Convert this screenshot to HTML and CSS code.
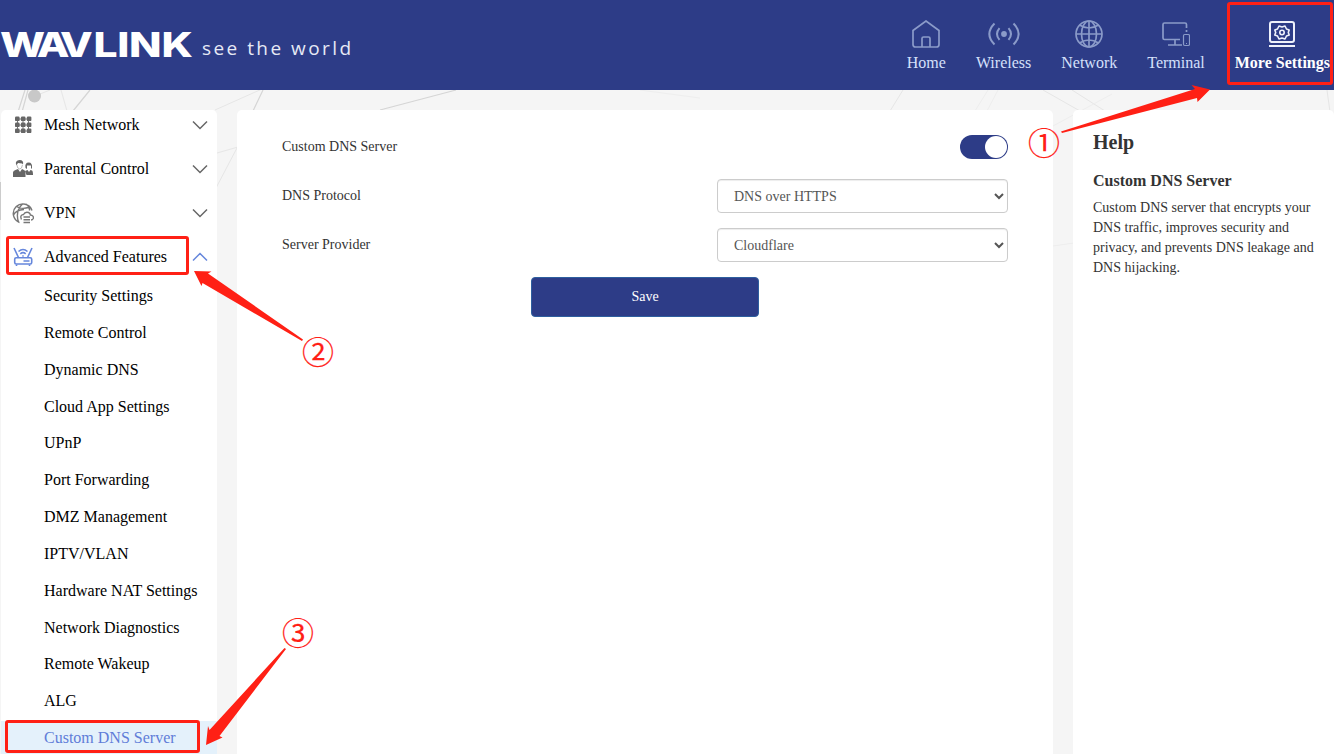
FILE: index.html
```html
<!DOCTYPE html>
<html lang="en">
<head>
<meta charset="utf-8">
<title>WAVLINK - Custom DNS Server</title>
<link rel="stylesheet" href="styles.css">
</head>
<body>
<svg class="backdrop" width="1334" height="754" viewBox="0 0 1334 754" fill="none" stroke="#e6e6e6">
  <path d="M25 90L18 112M28 90L22 112M90 90L73 111M253 111L263 90M380 110L456 90" stroke="#d5d5d5" stroke-width="1.2"/>
  <path d="M40 94L50 90M61 90L67 111M215 110L262 89M217 153L238 147M238 146L216 188M890 111L903 90M1043 90L1080 111M1072 90L1105 111M1327 90L1330 112"/>
  <path d="M975 111L988 90M987 111L998 90M1053 126L1112 94M1053 246L1074 243M640 90L700 98" stroke="#eeeeee"/>
  <circle cx="34.500" cy="96" r="6.500" fill="#c8c8c8" stroke="none"/>
  <path d="M0 182V220" stroke="#ccc" stroke-width="2"/>
</svg>

<header class="header">
  <div class="brand">
    <svg class="wordmark" width="191" height="34" viewBox="0 0 191 34">
      <text class="wordmark-text" transform="translate(0 29) scale(1.27 1)" dx="0 -4 -4.500 0.500 -0.300 -0.300 0">WAVLINK</text>
    </svg>
    <span class="tagline">see the world</span>
  </div>
  <nav class="nav">
    <a class="nav-item">
      <svg class="nav-icon" viewBox="0 0 28 28"><path d="M1 10.500L14 1L27 10.500V24.500Q27 27 24.500 27H3.500Q1 27 1 24.500ZM10 27V18.500Q10 17 11.500 17H16.500Q18 17 18 18.500V27"/></svg>
      <span>Home</span>
    </a>
    <a class="nav-item">
      <svg class="nav-icon wide" viewBox="0 0 32 28"><circle cx="16" cy="14" r="2.900" class="solid"/><path d="M11.500 8.200Q6.500 14 11.500 19.800M20.500 8.200Q25.500 14 20.500 19.800M6.500 3.500Q-3.800 14 6.500 24.500M25.500 3.500Q35.800 14 25.500 24.500" stroke-width="2"/></svg>
      <span>Wireless</span>
    </a>
    <a class="nav-item">
      <svg class="nav-icon" viewBox="0 0 28 28"><circle cx="14" cy="14" r="13"/><ellipse cx="14" cy="14" rx="7.500" ry="13"/><path d="M14 1V27M1 14H27M4.500 5Q14 11 23.500 5M4.500 23Q14 17 23.500 23"/></svg>
      <span>Network</span>
    </a>
    <a class="nav-item">
      <svg class="nav-icon" viewBox="0 0 28 28"><path d="M24.500 8V4.500Q24.500 3 23 3H2.500Q1 3 1 4.500V18Q1 19.500 2.500 19.500H18M13 20V25M6 25H20M24.500 10V12"/><rect x="21.500" y="14.500" width="6" height="11" rx="1.200" stroke-width="1.200"/><path d="M24 23.500H25" stroke-width="1"/></svg>
      <span>Terminal</span>
    </a>
    <a class="nav-item active">
      <svg class="nav-icon" viewBox="0 0 28 28"><rect x="2" y="2" width="24" height="20" rx="2"/><path d="M1 26H27"/><path d="M11 6L14 7L17 6L18.500 9L21.200 10L20.300 12.500L21.200 15L18.500 16L17 19L14 18L11 19L9.500 16L6.800 15L7.700 12.500L6.800 10L9.500 9Z" stroke-width="1.600" stroke-linejoin="round"/><circle cx="14" cy="12.500" r="2.200" stroke-width="1.600"/></svg>
      <span>More Settings</span>
    </a>
  </nav>
</header>

<main class="layout">
  <aside class="sidebar">
    <div class="menu">
      <div class="menu-row">
        <svg class="menu-icon" viewBox="0 0 22 22" fill="#666"><path d="M5 5H18M5 11H18M5 17H18M5.500 5V18M11 5V18M16.500 5V18" stroke="#777" stroke-width="1"/><g><rect x="3" y="2.500" width="4.600" height="4.600" rx="1.200"/><rect x="8.900" y="2.500" width="4.600" height="4.600" rx="1.200"/><rect x="14.800" y="2.500" width="4.600" height="4.600" rx="1.200"/><rect x="3" y="8.500" width="4.600" height="4.600" rx="1.200"/><rect x="8.900" y="8.500" width="4.600" height="4.600" rx="1.200"/><rect x="14.800" y="8.500" width="4.600" height="4.600" rx="1.200"/><rect x="3" y="14.500" width="4.600" height="4.600" rx="1.200"/><rect x="8.900" y="14.500" width="4.600" height="4.600" rx="1.200"/><rect x="14.800" y="14.500" width="4.600" height="4.600" rx="1.200"/></g></svg>
        <span>Mesh Network</span>
        <svg class="chevron" viewBox="0 0 16 10"><path d="M1 1.500L8 8.500L15 1.500"/></svg>
      </div>
      <div class="menu-row">
        <svg class="menu-icon" viewBox="0 0 22 22" fill="#666"><path d="M1 19V14.500Q1 12.500 3.500 12L6 11L8 14L10 11L12 12Q13.500 12.500 13.500 14.500V19Z"/><path d="M4 6.500Q3 2.500 7.500 2Q12 2.200 11 6.500L10 5.500L6 5L4.700 7Z"/><path d="M4.800 7Q5.500 11 7.700 11Q10 11 10.400 7" fill="none" stroke="#aaa" stroke-width=".8"/><path d="M13 13L15.500 12L17 14L18.500 12L20 12.500Q21 13 21 17H14.500ZM13.500 10Q12.500 4.500 16.800 4.500Q20.500 4.500 20 10L19 11V7.500L15 7.500V11Z"/></svg>
        <span>Parental Control</span>
        <svg class="chevron" viewBox="0 0 16 10"><path d="M1 1.500L8 8.500L15 1.500"/></svg>
      </div>
      <div class="menu-row">
        <svg class="menu-icon" viewBox="0 0 22 22" fill="none" stroke="#777" stroke-width="1.400"><path d="M7.500 20.500A9.600 9.600 0 1 1 20 8.500M4.500 4.500Q10 8 17.500 5M10.500 2Q3 9 6.500 20M14 2Q18 5 17.500 8.500M1.500 13Q4 8 12 7.500"/><path d="M9.500 17.500Q7.500 13 11.500 12.500Q13 9.500 16.500 10.500Q18.500 11.500 18.300 13Q22 13.500 21.300 16.500Q20.500 18 19 18M11.500 15H18M11.500 17.700H18M11.500 20.500H18"/></svg>
        <span>VPN</span>
        <svg class="chevron" viewBox="0 0 16 10"><path d="M1 1.500L8 8.500L15 1.500"/></svg>
      </div>
      <div class="menu-row open">
        <svg class="menu-icon" viewBox="0 0 22 22" fill="none" stroke="#6687dc" stroke-width="1.600"><rect x="2.700" y="11.800" width="17" height="6.200" rx="1.500"/><path d="M6.500 11.500L2 2M15.500 11.500L20 2M4.500 18.500V20M17.500 18.500V20M11.500 15H17.500M6.500 5.500Q11 1.500 15.500 5.500M8.300 7.800Q11 5.500 13.700 7.800M10.300 10H11.700"/></svg>
        <span>Advanced Features</span>
        <svg class="chevron" viewBox="0 0 16 10"><path d="M1 8.500L8 1.500L15 8.500"/></svg>
      </div>
      <div class="submenu-row">Security Settings</div>
      <div class="submenu-row">Remote Control</div>
      <div class="submenu-row">Dynamic DNS</div>
      <div class="submenu-row">Cloud App Settings</div>
      <div class="submenu-row">UPnP</div>
      <div class="submenu-row">Port Forwarding</div>
      <div class="submenu-row">DMZ Management</div>
      <div class="submenu-row">IPTV/VLAN</div>
      <div class="submenu-row">Hardware NAT Settings</div>
      <div class="submenu-row">Network Diagnostics</div>
      <div class="submenu-row">Remote Wakeup</div>
      <div class="submenu-row">ALG</div>
      <div class="submenu-row selected">Custom DNS Server</div>
    </div>
  </aside>

  <section class="panel">
    <div class="form-row">
      <span>Custom DNS Server</span>
      <span class="toggle"><span class="knob"></span></span>
    </div>
    <div class="form-row">
      <label for="protocol">DNS Protocol</label>
      <select id="protocol" class="field"><option>DNS over HTTPS</option></select>
    </div>
    <div class="form-row">
      <label for="provider">Server Provider</label>
      <select id="provider" class="field"><option>Cloudflare</option></select>
    </div>
    <button class="save">Save</button>
  </section>

  <aside class="help">
    <h2>Help</h2>
    <h3>Custom DNS Server</h3>
    <p>Custom DNS server that encrypts your DNS traffic, improves security and privacy, and prevents DNS leakage and DNS hijacking.</p>
  </aside>
</main>

<svg class="annotations" width="1334" height="754" viewBox="0 0 1334 754">
  <g class="frame">
    <rect x="1228.500" y="3.500" width="103" height="80" rx="1.500"/>
    <rect x="7.500" y="237.500" width="180" height="36" rx="1.500"/>
    <rect x="6.500" y="721.500" width="192" height="30" rx="1.500"/>
  </g>
  <g class="arrow">
    <path d="M1061 131.500L1195 89L1191.500 85L1210 89.500L1197.500 102L1197 98L1062 133Z"/>
    <path d="M303 339.500L208 273.500L211.500 271.500L194 271L201.500 286L202.500 283L302 341Z"/>
    <path d="M284.500 648L209.500 730L208 726L206 745L222.500 737.500L219.500 736L286 649Z"/>
  </g>
  <g class="step">
    <text x="1044" y="154.500">①</text>
    <text x="318" y="363.500">②</text>
    <text x="298" y="644.500">③</text>
  </g>
</svg>
</body>
</html>
```
FILE: styles.css
```css
* { box-sizing: border-box; }

body {
  margin: 0;
  width: 1334px;
  height: 754px;
  overflow: hidden;
  position: relative;
  background: #f5f5f5;
  font-family: "Liberation Serif", "Times New Roman", serif;
  color: #333;
}

.backdrop, .annotations { position: absolute; top: 0; left: 0; }
.backdrop { z-index: -1; }
.annotations { pointer-events: none; z-index: 2; }

.header {
  height: 90px;
  display: flex;
  justify-content: space-between;
  background: #2d3c87;
}

.brand { display: flex; align-items: flex-start; padding-top: 28px; }
.wordmark { flex: none; overflow: visible; }
.wordmark-text { font: 800 33.500px Inter, sans-serif; fill: #fff; }
.tagline {
  margin: 6px 0 0 11px;
  font: 19px/28px "Open Sans", sans-serif;
  letter-spacing: 2.450px;
  color: #e6e9f5;
  white-space: nowrap;
}

.nav { display: flex; gap: 30px; padding: 20px 4px 0 0; }
.nav-item {
  display: flex;
  flex-direction: column;
  align-items: center;
  gap: 5px;
  font-size: 16px;
  line-height: 20px;
  white-space: nowrap;
  color: #d5e0fb;
}
.nav-item.active { color: #fff; font-weight: bold; }
.nav-icon {
  width: 28px;
  height: 28px;
  fill: none;
  stroke: #8b9bc9;
  stroke-width: 1.7;
}
.nav-icon.wide { width: 32px; }
.nav-icon .solid { fill: #8b9bc9; stroke: none; }
.active .nav-icon { stroke: #eef1fb; stroke-width: 2; }

.layout {
  display: grid;
  grid-template-columns: 216px 816px 261px;
  gap: 20px;
  padding: 20px 0 0 1px;
  height: 664px;
}
.sidebar, .panel, .help { background: #fff; border-radius: 5px 5px 0 0; min-width: 0; }

.sidebar { overflow: hidden; color: #000; font-size: 16px; }
.menu { margin-top: -7px; }
.menu-row { display: flex; align-items: center; height: 44px; padding: 0 9px 0 11px; }
.menu-icon { width: 22px; height: 22px; margin-right: 10px; }
.chevron {
  width: 16px;
  height: 10px;
  margin-left: auto;
  fill: none;
  stroke: #666;
  stroke-width: 1.5;
}
.open .chevron { stroke: #6687dc; }
.submenu-row { height: 36.83px; line-height: 34.5px; padding: .1px 0 0 43px; white-space: nowrap; }
.submenu-row.selected { background: #e4f1fb; color: #5f7dd8; }

.panel { padding: 20px 45px; font-size: 14px; display: flex; flex-direction: column; }
.form-row {
  display: flex;
  justify-content: space-between;
  height: 49px;
  line-height: 33px;
}
.toggle {
  display: flex;
  justify-content: flex-end;
  width: 48px;
  height: 24px;
  margin-top: 5px;
  padding: 1px;
  border-radius: 12px;
  background: #2d3c87;
}
.knob { width: 22px; height: 22px; border-radius: 50%; background: #fff; }
.field {
  width: 291px;
  height: 34px;
  padding: 6px 12px;
  font: 14px/20px "Liberation Serif", serif;
  color: #555;
  background: #fff;
  border: 1px solid #ccc;
  border-radius: 4px;
  box-shadow: inset 0 1px 1px rgba(0, 0, 0, .075);
}
.save {
  align-self: center;
  width: 228px;
  height: 40px;
  padding: 0;
  border: 1px solid #2e5f9f;
  border-radius: 4px;
  background: #2d3c87;
  color: #fff;
  font: 14px "Liberation Serif", serif;
}

.help { padding: 21px 0 0 20px; }
.help h2 { margin: 0 0 18px; font-size: 20px; line-height: 22px; }
.help h3 { margin: 0 0 7px; font-size: 16px; line-height: 20px; }
.help p { margin: 0; width: 228px; font-size: 14px; line-height: 20px; }

.frame { fill: none; stroke: #ff2015; stroke-width: 3; }
.arrow { fill: #ff2015; }
.step text { font: 32px "Noto Sans CJK SC", sans-serif; fill: #ff2015; stroke: #ff2015; stroke-width: .2; text-anchor: middle; }
```
